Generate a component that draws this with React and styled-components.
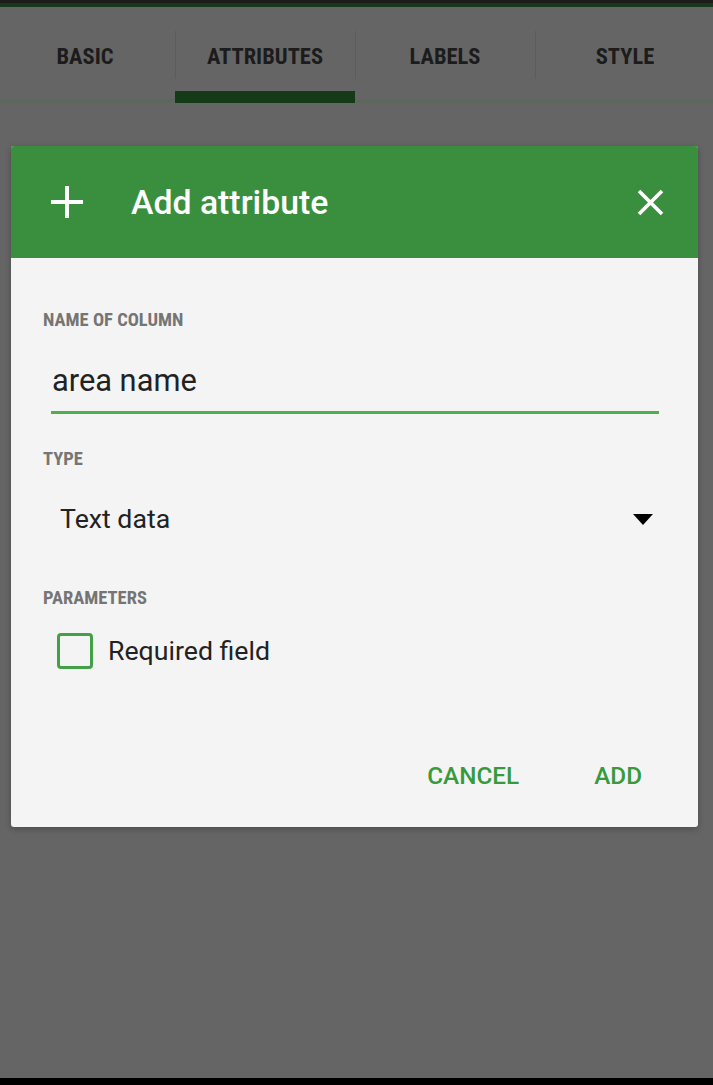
import React from "react";
import styled, { createGlobalStyle } from "styled-components";

const GlobalStyle = createGlobalStyle`
  html, body {
    margin: 0;
    padding: 0;
    height: 100%;
  }
  body {
    font-family: Roboto, "Noto Sans", sans-serif;
    background: #656565;
  }
  #root {
    height: 100%;
  }
`;

const condensed = `"Roboto Condensed", "Liberation Sans Narrow", "DejaVu Sans Condensed", Roboto, sans-serif`;

const Screen = styled.div`
  width: 100%;
  height: 100vh;
  display: flex;
  flex-direction: column;
  overflow: hidden;
  background: #656565;
`;

const StatusBar = styled.div`
  height: 3px;
  background: #1c1c1c;
  border-bottom: 4px solid #17381a;
  flex-shrink: 0;
`;

const TabBar = styled.div`
  display: flex;
  height: 96px;
  margin-left: -5px;
  flex-shrink: 0;
  box-shadow: inset 0 -4px 0 #5e675e;
`;

const Tab = styled.div`
  position: relative;
  width: 180px;
  flex-shrink: 0;
  display: flex;
  align-items: center;
  justify-content: center;
  font-family: ${condensed};
  font-weight: 700;
  font-size: 22.5px;
  color: #1c1c1c;
  padding-top: 2px;
  box-sizing: border-box;

  &::before {
    content: "";
    display: ${(p) => (p.$first ? "none" : "block")};
    position: absolute;
    left: 0;
    top: 24px;
    height: 48px;
    width: 1px;
    background: #5a5d5a;
  }

  &::after {
    content: "";
    display: ${(p) => (p.$active ? "block" : "none")};
    position: absolute;
    left: 0;
    right: 0;
    bottom: 0;
    height: 12px;
    background: #153a18;
  }
`;

const Backdrop = styled.div`
  flex: 1;
  padding: 43px 15px 0 11px;
`;

const Dialog = styled.div`
  background: #f4f4f4;
  border-radius: 3px;
  overflow: hidden;
  box-shadow: 0 2px 6px rgba(0, 0, 0, 0.25);
`;

const Header = styled.div`
  height: 112px;
  background: #3a8f3f;
  display: flex;
  align-items: center;
  padding: 0 34px 0 40px;
  color: #fff;
`;

const HeaderIcon = styled.svg`
  width: ${(p) => p.$size}px;
  height: ${(p) => p.$size}px;
  flex-shrink: 0;
`;

const Title = styled.h1`
  flex: 1;
  margin: 2px 0 0 48px;
  font-family: Roboto, sans-serif;
  font-weight: 500;
  font-size: 33.8px;
  line-height: 40px;
  color: #fff;
`;

const Body = styled.div`
  display: flex;
  flex-direction: column;
  padding: 52px 32px 27px 32px;
`;

const Label = styled.div`
  font-family: ${condensed};
  font-weight: 700;
  font-size: 18.5px;
  line-height: 20px;
  color: #757575;
  margin-top: ${(p) => p.$gap || 0}px;
`;

const Input = styled.div`
  margin: 30px 7px 0 8px;
  padding: 0 0 10px 1px;
  border-bottom: 3px solid #4caf50;
  font-size: 30.8px;
  line-height: 41px;
  color: #222;
`;

const Select = styled.div`
  margin-top: 30px;
  display: flex;
  align-items: center;
  justify-content: space-between;
  padding: 0 13px 0 17px;
  font-size: 26.7px;
  line-height: 40px;
  color: #222;
`;

const Caret = styled.span`
  width: 0;
  height: 0;
  border-left: 10px solid transparent;
  border-right: 10px solid transparent;
  border-top: 11px solid #000;
`;

const CheckRow = styled.label`
  margin-top: 25px;
  display: flex;
  align-items: center;
  gap: 15px;
  padding-left: 14px;
  font-size: 26.7px;
  line-height: 36px;
  color: #222;
`;

const Box = styled.span`
  width: 36px;
  height: 36px;
  box-sizing: border-box;
  border: 3px solid #43a047;
  border-radius: 4px;
  flex-shrink: 0;
`;

const Actions = styled.div`
  margin-top: 83px;
  display: flex;
  justify-content: flex-end;
  gap: 43px;
  padding-right: 8px;
`;

const TextButton = styled.button`
  border: 0;
  background: transparent;
  padding: 0 16px;
  font-family: Roboto, sans-serif;
  font-weight: 500;
  font-size: 24.3px;
  line-height: 48px;
  color: #379a3d;
  cursor: pointer;
`;

const NavBar = styled.div`
  height: 7px;
  background: #000;
  flex-shrink: 0;
`;

const tabs = ["BASIC", "ATTRIBUTES", "LABELS", "STYLE"];

export default function App() {
  return (
    <>
      <GlobalStyle />
      <Screen>
        <StatusBar />
        <TabBar>
          {tabs.map((t, i) => (
            <Tab key={t} $first={i === 0} $active={t === "ATTRIBUTES"}>
              {t}
            </Tab>
          ))}
        </TabBar>
        <Backdrop>
          <Dialog>
            <Header>
              <HeaderIcon $size={32} viewBox="0 0 32 32">
                <path d="M16 0v32M0 16h32" stroke="#fff" strokeWidth="4" />
              </HeaderIcon>
              <Title>Add attribute</Title>
              <HeaderIcon $size={27} viewBox="0 0 27 27">
                <path d="M2 2l23 23M25 2L2 25" stroke="#fff" strokeWidth="3.6" />
              </HeaderIcon>
            </Header>
            <Body>
              <Label>NAME OF COLUMN</Label>
              <Input>area name</Input>
              <Label $gap={35}>TYPE</Label>
              <Select>
                <span>Text data</span>
                <Caret />
              </Select>
              <Label $gap={49}>PARAMETERS</Label>
              <CheckRow>
                <Box />
                Required field
              </CheckRow>
              <Actions>
                <TextButton>CANCEL</TextButton>
                <TextButton>ADD</TextButton>
              </Actions>
            </Body>
          </Dialog>
        </Backdrop>
        <NavBar />
      </Screen>
    </>
  );
}
